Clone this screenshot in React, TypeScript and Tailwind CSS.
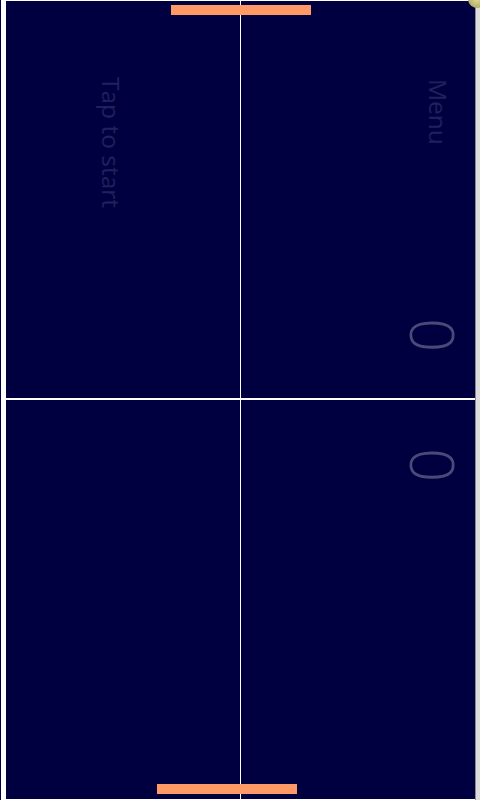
import React from "react";

const vert = "[writing-mode:vertical-rl] leading-none whitespace-nowrap";

export default function App() {
  return (
    <div
      className="relative flex w-[480px] h-[800px] bg-[#000040] overflow-hidden"
      style={{ fontFamily: '"Open Sans", "Noto Sans", sans-serif' }}
    >
      <div className="w-px bg-[#000040]" />
      <div className="w-[5px] bg-white" />
      <div className="flex-1 flex flex-col border-t border-b border-white">
        <div className="h-[397px] grid grid-cols-[234px_1px_1fr]">
          <div />
          <div className="bg-white" />
          <div />
        </div>
        <div className="h-[2px] bg-white" />
        <div className="flex-1 grid grid-cols-[234px_1px_1fr]">
          <div />
          <div className="bg-white" />
          <div />
        </div>
      </div>
      <div className="w-px bg-[#8a8a8a]" />
      <div className="w-[4px] bg-[#dcdcdc]" />

      {/* paddles */}
      <div className="absolute left-[171px] top-[5px] w-[140px] h-[10px] bg-[#ff9966]" />
      <div className="absolute left-[157px] top-[784px] w-[140px] h-[10px] bg-[#ff9966]" />

      {/* texts */}
      <div className={`absolute left-[425px] top-[79px] text-[24.5px] text-[#20205a] ${vert}`}>Menu</div>
      <div className={`absolute left-[98px] top-[77px] text-[24.5px] text-[#20205a] ${vert}`}>Tap to start</div>

      {/* scores */}
      <div className={`absolute left-[403px] top-[318px] text-[60px] font-light text-[#4a4a78] ${vert}`}>0</div>
      <div className={`absolute left-[403px] top-[448px] text-[60px] font-light text-[#4a4a78] ${vert}`}>0</div>

      {/* corner glow */}
      <div className="absolute left-[468px] top-[-10px] w-[18px] h-[18px] rounded-full bg-[radial-gradient(circle,#e0dc9a_0%,#b4ae64_70%,#8a8650_100%)]" />
    </div>
  );
}
